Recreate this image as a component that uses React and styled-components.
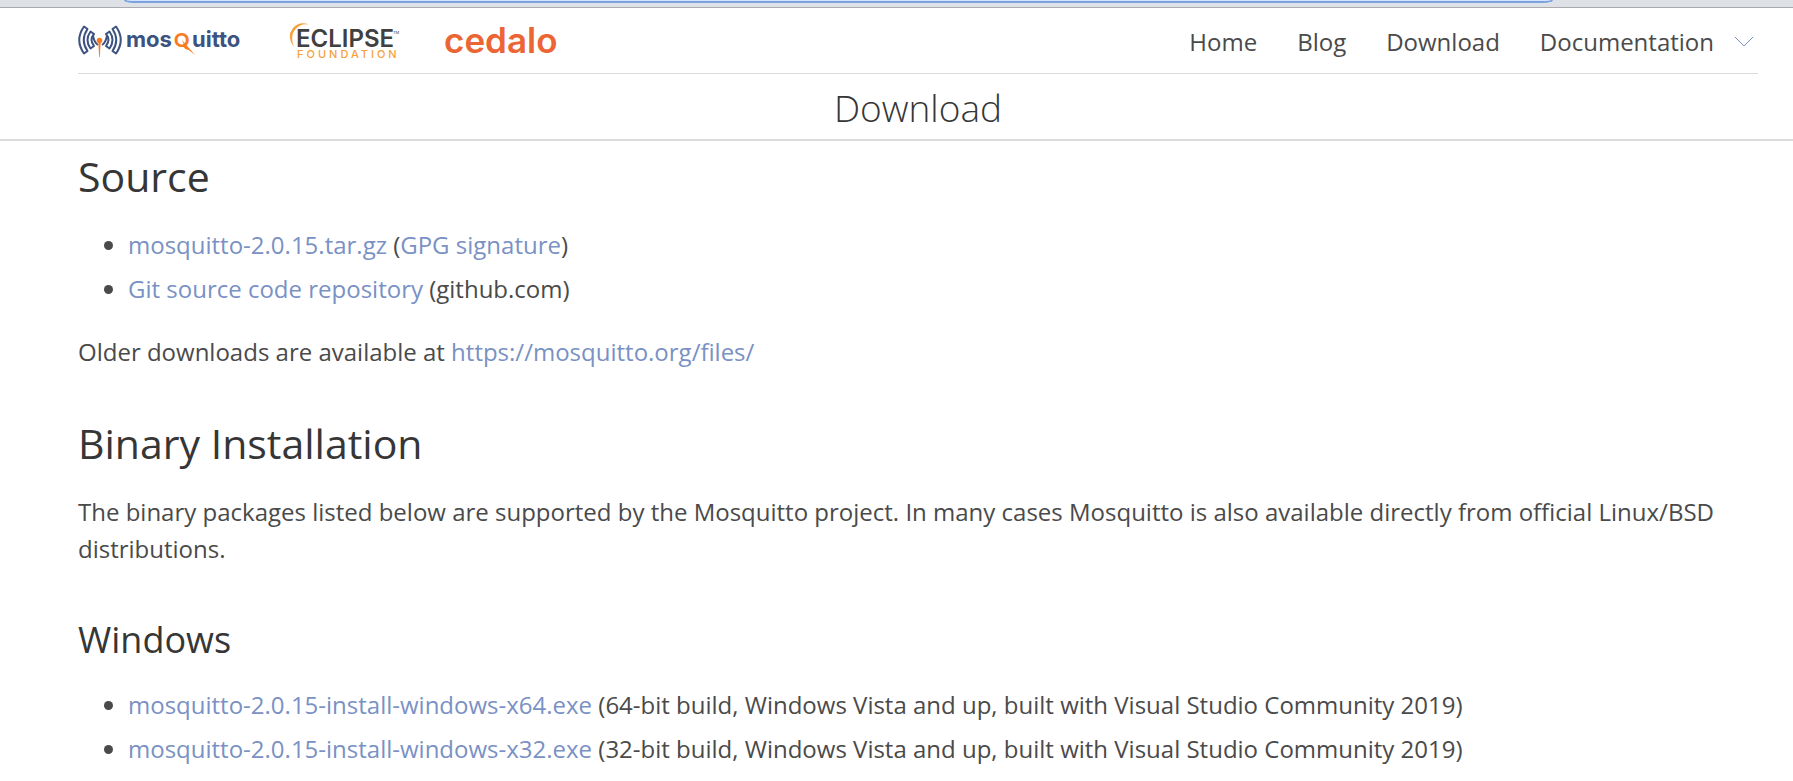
import React from "react";
import styled, { createGlobalStyle } from "styled-components";

const GlobalStyle = createGlobalStyle`
  *, *::before, *::after { box-sizing: border-box; }
  html { overflow: hidden; }
  body {
    margin: 0;
    background: #fff;
    color: #4a4a4a;
    font: 400 24px/37px "Open Sans", "Noto Sans", sans-serif;
  }
`;

const BrowserEdge = styled.div`
  display: flex;
  height: 8px;
  padding: 0 240px 0 124px;
  background: #dee1e6;
  border-bottom: 1px solid #a9abae;
`;

const AddressBarEdge = styled.div`
  flex: 1;
  height: 3px;
  background: #d3e3fb;
  border: 2px solid #7ba2e0;
  border-top: 0;
  border-radius: 0 0 10px 10px / 0 0 3px 3px;
`;

const Header = styled.header`
  padding: 0 35px 0 78px;
  border-bottom: 2px solid #dbdbdb;
  box-shadow: -78px 0 0 #fff;
`;

const Navbar = styled.div`
  display: flex;
  align-items: center;
  justify-content: space-between;
  height: 66px;
  border-bottom: 1px solid #dbdbdb;
`;

const Logos = styled.div`
  display: flex;
  align-items: center;
  gap: 46px;
`;

const LogoLink = styled.a`
  display: block;
  line-height: 0;
`;

const LogoArt = styled.svg`
  overflow: visible;
  font-family: Inter, "Open Sans", sans-serif;
`;

const QLetter = styled.text`
  font-family: Lato, sans-serif;
  font-variant: small-caps;
`;

const Nav = styled.nav`
  display: flex;
  align-items: center;
  gap: 40px;
  padding-top: 2px;
`;

const NavLink = styled.a`
  display: flex;
  align-items: center;
  gap: 20px;
  color: #4a4a4a;
  text-decoration: none;
`;

const Chevron = styled.svg`
  margin-right: 4px;
`;

const PageTitle = styled.h1`
  margin: 0;
  padding: 10px 0 7px;
  color: #363636;
  font-size: 37px;
  font-weight: 300;
  line-height: 48px;
  text-align: center;
`;

const Content = styled.main`
  padding: 8px 78px 0;
`;

const SectionTitle = styled.h2`
  margin: ${(p) => (p.$spaced ? "46px" : "0")} 0 22px;
  color: #363636;
  font-size: 41px;
  font-weight: 400;
  line-height: 55px;
`;

const SubTitle = styled.h3`
  margin: 49px 0 22px;
  color: #363636;
  font-size: 36px;
  font-weight: 400;
  line-height: 48px;
`;

const DownloadList = styled.ul`
  margin: 0 0 26px;
  padding: 0 0 0 50px;
`;

const DownloadItem = styled.li`
  & + & { margin-top: 7px; }
`;

const Paragraph = styled.p`
  margin: 0;
`;

const TextLink = styled.a`
  color: #7a91c4;
  text-decoration: none;
`;

function MosquittoLogo() {
  return (
    <LogoArt width="164" height="36" viewBox="78 23 164 36" role="img" aria-label="mosquitto">
      <g fill="none" stroke="#3c5280" strokeWidth="2" strokeLinejoin="round">
        <path d="M84 26.5Q74.500 40 84 53.500L87.500 51Q80 40 87.500 29Z" />
        <path d="M90.500 31.500Q84.500 40 90.500 48.500L94 46Q91.500 42.500 91.500 40Q91.500 37 94 34Z" />
        <path d="M116 26.500Q125.500 40 116 53.500L112.500 51Q120 40 112.500 29Z" />
        <path d="M109.500 31.500Q115.500 40 109.500 48.500L106 46Q108.500 42.500 108.500 40Q108.500 37 106 34Z" />
        <path d="M93 36Q94.500 43 98 45M107 36Q105.500 43 102 45" />
      </g>
      <circle cx="99.500" cy="40.500" r="2.800" fill="#f97a1f" />
      <path d="M98.300 42H100.700L99.800 57H99.200Z" fill="#f97a1f" />
      <g fill="#3c5280" fontSize="22" fontWeight="700">
        <text x="126" y="47">mos</text>
        <QLetter x="174" y="47" fill="#f97a1f" fontSize="27" fontWeight="900">q</QLetter>
        <text x="192" y="47">uitto</text>
      </g>
      <path d="M182 40L195 55L185 47Z" fill="#f97a1f" />
    </LogoArt>
  );
}

function EclipseLogo() {
  return (
    <LogoArt width="110" height="38" viewBox="290 22 110 38" role="img" aria-label="Eclipse Foundation">
      <path d="M311 24.500Q301 21 295 28Q288 37 296 47Q291.500 36 297.500 29Q303 23 311 24.500Z" fill="#f7a13a" />
      <text x="298" y="47" fill="#404041" fontSize="24" fontWeight="600">ECLIPSE</text>
      <text x="395" y="34" fill="#404041" fontSize="4">TM</text>
      <text x="299" y="58" fill="#f7a13a" fontSize="11" fontWeight="500" letterSpacing="3">FOUNDATION</text>
    </LogoArt>
  );
}

function CedaloLogo() {
  return (
    <LogoArt width="116" height="36" viewBox="444 23 116 36" role="img" aria-label="cedalo">
      <text x="444" y="53" fill="#ec6534" fontSize="35" fontWeight="600">cedalo</text>
    </LogoArt>
  );
}

const NAV = ["Home", "Blog", "Download"];

const SOURCES = [
  { name: "mosquitto-2.0.15.tar.gz", note: <> (<TextLink href="#signature">GPG signature</TextLink>)</> },
  { name: "Git source code repository", note: " (github.com)" },
];

const WINDOWS = [
  { name: "mosquitto-2.0.15-install-windows-x64.exe", note: " (64-bit build, Windows Vista and up, built with Visual Studio Community 2019)" },
  { name: "mosquitto-2.0.15-install-windows-x32.exe", note: " (32-bit build, Windows Vista and up, built with Visual Studio Community 2019)" },
];

function Downloads({ items }) {
  return (
    <DownloadList>
      {items.map((item) => (
        <DownloadItem key={item.name}>
          <TextLink href="#download">{item.name}</TextLink>
          {item.note}
        </DownloadItem>
      ))}
    </DownloadList>
  );
}

export default function App() {
  return (
    <>
      <GlobalStyle />
      <BrowserEdge><AddressBarEdge /></BrowserEdge>
      <Header>
        <Navbar>
          <Logos>
            <LogoLink href="#mosquitto"><MosquittoLogo /></LogoLink>
            <LogoLink href="#eclipse"><EclipseLogo /></LogoLink>
            <LogoLink href="#cedalo"><CedaloLogo /></LogoLink>
          </Logos>
          <Nav>
            {NAV.map((label) => (
              <NavLink key={label} href={`#${label.toLowerCase()}`}>{label}</NavLink>
            ))}
            <NavLink href="#documentation">
              Documentation
              <Chevron width="20" height="12" viewBox="0 0 20 12" fill="none" stroke="#7a91c4" aria-hidden="true">
                <path d="M1 1L10 10L19 1" />
              </Chevron>
            </NavLink>
          </Nav>
        </Navbar>
        <PageTitle>Download</PageTitle>
      </Header>
      <Content>
        <SectionTitle>Source</SectionTitle>
        <Downloads items={SOURCES} />
        <Paragraph>
          Older downloads are available at <TextLink href="#files">https://mosquitto.org/files/</TextLink>
        </Paragraph>
        <SectionTitle $spaced>Binary Installation</SectionTitle>
        <Paragraph>
          The binary packages listed below are supported by the Mosquitto project. In many cases Mosquitto is
          also available directly from official Linux/BSD distributions.
        </Paragraph>
        <SubTitle>Windows</SubTitle>
        <Downloads items={WINDOWS} />
      </Content>
    </>
  );
}
